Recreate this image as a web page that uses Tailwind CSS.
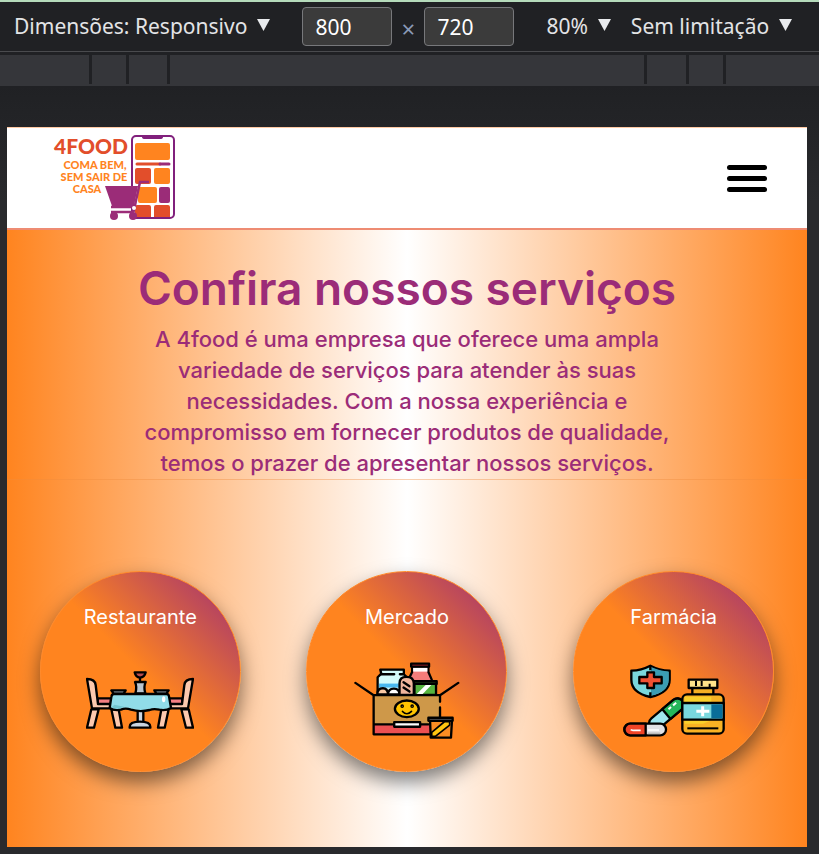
<!DOCTYPE html>
<html lang="pt-BR">
<head>
<meta charset="utf-8">
<meta name="viewport" content="width=device-width, initial-scale=1">
<title>4food - Serviços</title>
<script src="https://cdn.jsdelivr.net/npm/@tailwindcss/browser@4"></script>
</head>
<body class="flex min-h-screen flex-col bg-[#242528] font-['Inter',sans-serif]">
<!-- Device toolbar -->
<div class="flex h-[52px] items-center border-t-2 border-b border-t-[#b5dbbb] border-b-[#4a4b4e] bg-[#202124] pl-3.5 font-['Noto_Sans',sans-serif] text-[21px] text-[#e3e4e6]">
  <label class="mr-8 flex items-center gap-2.5">
    <select aria-label="Dimensões" class="field-sizing-content appearance-none bg-transparent"><option>Dimensões: Responsivo</option></select>
    <svg class="mb-1 h-3 w-[13px]" viewBox="0 0 13 12" fill="#e8eaed"><path d="M0 0h13L6.500 12z"/></svg>
  </label>
  <input aria-label="Largura" value="800" class="h-[39px] w-[90px] rounded border border-[#77787b] bg-[#3b3b3b] px-3 text-white">
  <span class="w-8 pt-1 text-center text-2xl text-[#8a9ab5]">×</span>
  <input aria-label="Altura" value="720" class="mr-8 h-[39px] w-[90px] rounded border border-[#77787b] bg-[#3b3b3b] px-3 text-white">
  <label class="mr-5 flex items-center gap-2.5">
    <select aria-label="Zoom" class="field-sizing-content appearance-none bg-transparent"><option>80%</option></select>
    <svg class="mb-1 h-3 w-[13px]" viewBox="0 0 13 12" fill="#e8eaed"><path d="M0 0h13L6.500 12z"/></svg>
  </label>
  <label class="flex items-center gap-2.5">
    <select aria-label="Limitação" class="field-sizing-content appearance-none bg-transparent"><option>Sem limitação</option></select>
    <svg class="mb-1 h-3 w-[13px]" viewBox="0 0 13 12" fill="#e8eaed"><path d="M0 0h13L6.500 12z"/></svg>
  </label>
</div>
<!-- Breakpoint bar -->
<div class="border-t-3 border-[#202124] bg-[#35363a] pb-0.5">
  <div class="flex h-[29px] divide-x-3 divide-[#202124]">
    <div class="w-[92px]"></div><div class="w-[37px]"></div><div class="w-[41px]"></div>
    <div class="flex-1"></div>
    <div class="w-[42px]"></div><div class="w-[37px]"></div><div class="w-[93px]"></div>
  </div>
</div>
<!-- Viewport -->
<div class="flex flex-1 flex-col bg-linear-to-b from-[#202124] to-[#292a2d] to-15% pt-[41px] pr-3 pb-[7px] pl-[7px]">
  <header class="flex h-[103px] items-center justify-between border-t border-b-2 border-t-[#ffc9a3] border-b-[#ee8c73] bg-white pr-10 pl-[46px]">
    <a href="#" aria-label="4FOOD">
      <svg class="h-[88px] w-[124px]" viewBox="0 2 124 88" font-family="Lato, sans-serif" font-weight="900">
        <g text-anchor="middle">
          <text x="38" y="22" font-size="21" fill="#e24e2b">4FOOD</text>
          <g fill="#ff841f" font-size="11"><text x="42" y="37">COMA BEM,</text><text x="41" y="49">SEM SAIR DE</text><text x="34" y="61">CASA</text></g>
        </g>
        <rect x="79" y="4" width="42" height="82" rx="4" fill="#fff" stroke="#81207c" stroke-width="2"/>
        <path d="M89 3h21v2q0 2-3 2H92q-3 0-3-2z" fill="#81207c"/>
        <rect x="82" y="11" width="35" height="17" rx="2" fill="#ff841f"/>
        <path d="M84 32h23" stroke="#e24e2b" stroke-width="3" stroke-linecap="round"/><path d="M107 32h9" stroke="#9b2c78" stroke-width="3" stroke-linecap="round"/>
        <rect x="82" y="36" width="16" height="16" rx="2" fill="#e24e2b"/><rect x="101" y="36" width="16" height="16" rx="2" fill="#ff841f"/>
        <rect x="85" y="55" width="19" height="16" rx="2" fill="#ff841f"/><rect x="106" y="55" width="11" height="16" rx="2" fill="#9b2c78"/>
        <path d="M84 73h12q2 0 2 2v10H82V75q0-2 2-2zM103 73h12q2 0 2 2v10h-16V75q0-2 2-2z" fill="#e24e2b"/>
        <path d="M52 54h33l-4 20H59z" fill="#9b2c78"/>
        <path d="M96 50h-9l-6 28q0 2-3 2H58M58 75h24" fill="none" stroke="#9b2c78" stroke-width="2.500"/>
        <circle cx="61" cy="84" r="4" fill="#9b2c78"/><circle cx="80" cy="84" r="4" fill="#9b2c78"/><circle cx="81" cy="76" r="2" fill="#fff"/>
      </svg>
    </a>
    <button aria-label="Menu" class="flex flex-col gap-[6px]">
      <span class="h-[5px] w-10 rounded-full bg-black"></span><span class="h-[5px] w-10 rounded-full bg-black"></span><span class="h-[5px] w-10 rounded-full bg-black"></span>
    </button>
  </header>
  <main class="flex-1 bg-linear-to-r/srgb from-[#ff841f] via-white to-[#ff841f] pb-[74px]">
    <section class="border-b border-[#ee8c3f]/40 pt-[26px] text-center text-[#9b2c78]">
      <h1 class="mb-1 text-[46px] leading-16 font-semibold">Confira nossos serviços</h1>
      <p class="mx-auto max-w-[560px] text-[22px] leading-[31px] font-medium">A 4food é uma empresa que oferece uma ampla variedade de serviços para atender às suas necessidades. Com a nossa experiência e compromisso em fornecer produtos de qualidade, temos o prazer de apresentar nossos serviços.</p>
    </section>
    <section class="grid grid-cols-3 justify-items-center pt-[91px] text-xl text-white">
      <a href="#" class="flex size-[201px] flex-col items-center gap-7 rounded-full border border-[#ff8a2b] bg-linear-to-tr/srgb from-[#ff841f] from-50% to-[#9b2c78] pt-[30px] shadow-[0_10px_20px_rgba(0,0,0,0.5)]">
        <span class="leading-[30px]">Restaurante</span>
        <span class="flex h-20 items-center">
          <svg class="h-[58px] w-[108px]" viewBox="168 336 324 174" stroke="#000" stroke-width="7" stroke-linejoin="round">
            <g id="chair">
              <path d="M203 418h40v22h-40z" fill="#f47f83"/>
              <path d="M171 360q24 0 26 18l7 57h38v13h-56z" fill="#fcc9ae"/>
              <path d="M184 451h22l-14 55h-21zM244 451h22l10 55h-20z" fill="#fcc9ae"/>
            </g>
            <use href="#chair" transform="matrix(-1 0 0 1 660 0)"/>
            <path d="M323 450h17v42h-17z" fill="#cbd5df"/><path d="M299 503q0-15 31-15t31 15v3h-62z" fill="#cbd5df"/>
            <path d="M244 394h43l-6 10h-30zM373 394h43l-7 10h-30z" fill="#9faebb"/>
            <path d="M315 369h32q-7 15-1 34h-30q6-19-1-34z" fill="#b9c5cf"/>
            <path d="M330 355v15" /><path d="M314 340h33q-3 15-17 16-13-1-16-16z" fill="#b84d50"/>
            <path d="M252 405h157q7 0 8 7l6 35q-16 9-35 5-17-4-29 1-29 7-56-1-17-6-30 0-20 4-34-5l5-33q1-9 8-9z" fill="#91dce8"/>
            <path d="M253 437l-8 8q15 7 37-2z" fill="#72c5cf" stroke="none"/><ellipse cx="401" cy="421" rx="5" ry="9" fill="#fff" stroke="none"/>
          </svg>
        </span>
      </a>
      <a href="#" class="flex size-[201px] flex-col items-center gap-7 rounded-full border border-[#ff8a2b] bg-linear-to-tr/srgb from-[#ff841f] from-50% to-[#9b2c78] pt-[30px] shadow-[0_10px_20px_rgba(0,0,0,0.5)]">
        <span class="leading-[30px]">Mercado</span>
        <span class="flex h-20 items-center">
          <svg class="h-[77px] w-[106px]" viewBox="162 307 319 232" stroke="#000" stroke-width="7" stroke-linecap="round" stroke-linejoin="round" fill="none">
            <path d="M241 330h71v14l14 14v48h-93v-53l11-11z" fill="#d3fbfa"/><path d="M237 372h60v12h-60z" fill="#4ab8ee" stroke="none"/><path d="M243 344h40M300 344h10"/>
            <path d="M337 321h49v16l10 23v42h-60l-7-48 8-17z" fill="#f47c7a"/><path d="M340 324h43v12h-43z" fill="#fff" stroke="none"/><path d="M334 312h54v9h-54z" fill="#b82531"/>
            <path d="M232 405q0-19 17-19 14 0 16 19z" fill="#f9c9a5"/><path d="M264 405q1-18 18-18 17 0 17 18z" fill="#fff"/>
            <path d="M344 373h65v33h-65z" fill="#56b43f"/><path d="M350 404l30-30h17l-29 30z" fill="#fff" stroke="none"/><path d="M341 365h70v8h-70z" fill="#477c36"/>
            <path d="M299 406v-35q0-19 21-19t22 19v35z" fill="#efb59c"/><path d="M311 368l18 12M311 384l18 12"/>
            <path d="M221 407h200v118H221z" fill="#ce9849" stroke="none"/><path d="M221 496h170v29H221z" fill="#ed5052" stroke="none"/>
            <path d="M166 370l55 37h200l55-37M221 407v118h167M221 495h165M421 407v20M421 444v30"/>
            <ellipse cx="321" cy="448" rx="36" ry="25" fill="#ffc400"/><path d="M308 456q13 14 27 0" stroke-width="5"/><circle cx="307" cy="440" r="2"/><circle cx="337" cy="440" r="2"/>
            <path d="M283 488h78v14h-78z" fill="#fff"/>
            <path d="M391 484h66l-3 51h-61z" fill="#fb8d23"/><path d="M396 519l38-32h16v10l-43 34h-11z" fill="#ffc510" stroke-width="5"/><path d="M386 475h73v9h-73z" fill="#858991"/>
          </svg>
        </span>
      </a>
      <a href="#" class="flex size-[201px] flex-col items-center gap-7 rounded-full border border-[#ff8a2b] bg-linear-to-tr/srgb from-[#ff841f] from-50% to-[#9b2c78] pt-[30px] shadow-[0_10px_20px_rgba(0,0,0,0.5)]">
        <span class="leading-[30px]">Farmácia</span>
        <span class="flex h-20 items-center">
          <svg class="h-[73px] w-[102px]" viewBox="173 313 306 219" stroke="#000" stroke-width="7" stroke-linejoin="round">
            <path d="M255 318q26 14 58 15v27q0 39-58 52-57-13-57-52v-27q30-1 57-15z" fill="#7ad7dc"/><path d="M257 322q28 12 53 14v24q0 36-53 48z" fill="#3b9cb4" stroke="none"/>
            <path d="M255 319v13M255 398v13M246 338h20v14h23v19h-23v14h-20v-14h-24v-19h24z" fill="#f05032"/>
            <g transform="rotate(-40 301 465)"><rect x="242" y="446" width="124" height="38" rx="19" fill="#9fe6ee"/><path d="M304 446h43a19 19 0 0 1 0 38h-43z" fill="#25b65b"/><path d="M318 458h10m8 0h12" stroke="#fff" stroke-width="6"/></g>
            <rect x="177" y="492" width="125" height="35" rx="17" fill="#e2e2e5"/><path d="M241 492h-46a17.500 17.500 0 0 0 0 35h46z" fill="#f04426"/><path d="M196 510l6 2h24M248 511h33" stroke="#fff" stroke-width="5"/><path d="M247 521h38" stroke="#bbb" stroke-width="5"/>
            <path d="M381 383h63v25h-63z" fill="#f5af24"/><path d="M370 360h86v25h-86z" fill="#ffe38a"/><path d="M392 363v16M409 363v16M433 372v13" stroke-width="6"/>
            <rect x="351" y="404" width="124" height="118" rx="14" fill="#f8b224"/><path d="M358 411h80v16h-80zM358 484h75l-20 8h-55z" fill="#f9d02b" stroke="none"/>
            <path d="M351 430h124v50H351z" fill="#79d8de"/><path d="M438 434h33v42h-33z" fill="#096d99" stroke="none"/><path d="M412 440v30M393 455h39" stroke="#fff" stroke-width="9"/><path d="M366 506h93" stroke-width="6"/>
          </svg>
        </span>
      </a>
    </section>
  </main>
</div>
</body>
</html>
